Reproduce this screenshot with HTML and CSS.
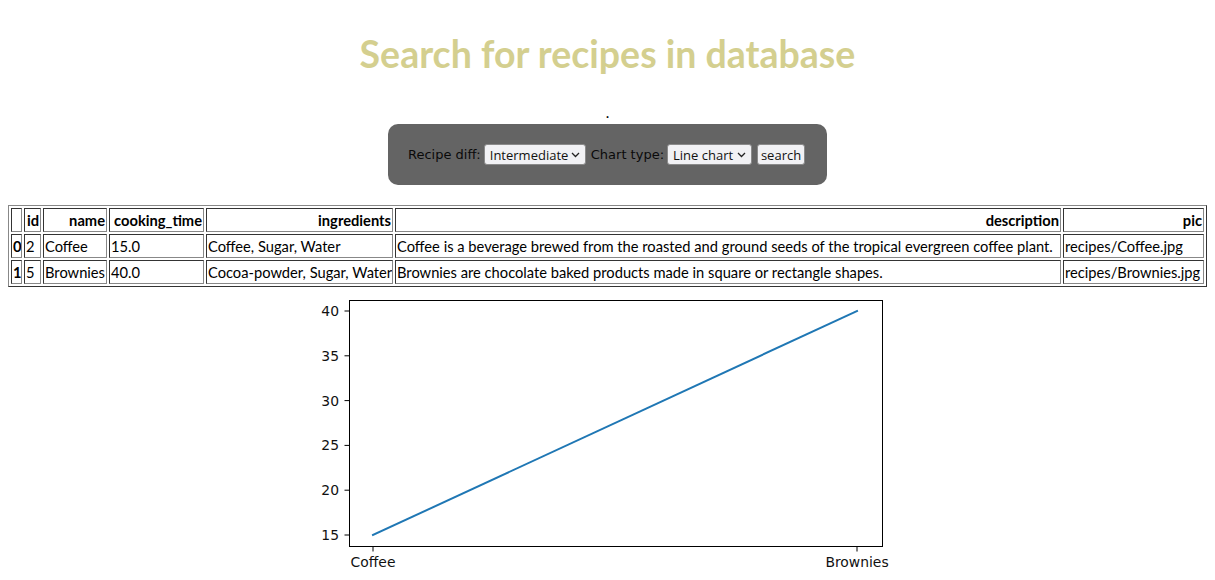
FILE: index.html
```html
<!DOCTYPE html>
<html>
<head>
<meta charset="utf-8">
<title>Recipes</title>
<link rel="stylesheet" href="styles.css">
</head>
<body>
<h1 class="title">Search for recipes in database</h1>
<p class="dot">.</p>
<form class="panel">
  <label class="lbl" for="diff">Recipe diff:</label>
  <span class="sel-wrap sel-diff">
    <select id="diff" class="sel"><option>Intermediate</option></select>
    <svg class="chev" width="9" height="6" viewBox="0 0 9 6"><path d="M1 1 L4.5 4.5 L8 1" fill="none" stroke="#222" stroke-width="1.3"/></svg>
  </span>
  <label class="lbl" for="chart">Chart type:</label>
  <span class="sel-wrap sel-chart">
    <select id="chart" class="sel"><option>Line chart</option></select>
    <svg class="chev" width="9" height="6" viewBox="0 0 9 6"><path d="M1 1 L4.5 4.5 L8 1" fill="none" stroke="#222" stroke-width="1.3"/></svg>
  </span>
  <button type="button" class="btn">search</button>
</form>
<table class="dataframe">
  <colgroup>
    <col class="c-idx"><col class="c-id"><col class="c-name"><col class="c-time"><col class="c-ing"><col class="c-desc"><col class="c-pic">
  </colgroup>
  <thead>
    <tr><th></th><th>id</th><th>name</th><th>cooking_time</th><th>ingredients</th><th>description</th><th>pic</th></tr>
  </thead>
  <tbody>
    <tr><th>0</th><td>2</td><td>Coffee</td><td>15.0</td><td>Coffee, Sugar, Water</td><td>Coffee is a beverage brewed from the roasted and ground seeds of the tropical evergreen coffee plant.</td><td>recipes/Coffee.jpg</td></tr>
    <tr><th>1</th><td>5</td><td>Brownies</td><td>40.0</td><td>Cocoa-powder, Sugar, Water</td><td>Brownies are chocolate baked products made in square or rectangle shapes.</td><td>recipes/Brownies.jpg</td></tr>
  </tbody>
</table>
<svg class="chart" width="641" height="294" viewBox="0 0 641 294">
  <g font-family="DejaVu Sans" font-size="13.9" fill="#111">
    <line x1="62.5" y1="25" x2="57.5" y2="25" stroke="#000" stroke-width="1"/>
    <line x1="62.5" y1="69.8" x2="57.5" y2="69.8" stroke="#000" stroke-width="1"/>
    <line x1="62.5" y1="114.6" x2="57.5" y2="114.6" stroke="#000" stroke-width="1"/>
    <line x1="62.5" y1="159.4" x2="57.5" y2="159.4" stroke="#000" stroke-width="1"/>
    <line x1="62.5" y1="204.2" x2="57.5" y2="204.2" stroke="#000" stroke-width="1"/>
    <line x1="62.5" y1="249" x2="57.5" y2="249" stroke="#000" stroke-width="1"/>
    <text x="52" y="30" text-anchor="end">40</text>
    <text x="52" y="74.8" text-anchor="end">35</text>
    <text x="52" y="119.6" text-anchor="end">30</text>
    <text x="52" y="164.4" text-anchor="end">25</text>
    <text x="52" y="209.2" text-anchor="end">20</text>
    <text x="52" y="254" text-anchor="end">15</text>
    <line x1="86" y1="260.5" x2="86" y2="265.5" stroke="#000" stroke-width="1"/>
    <line x1="570" y1="260.5" x2="570" y2="265.5" stroke="#000" stroke-width="1"/>
    <text x="86" y="280.5" text-anchor="middle">Coffee</text>
    <text x="570" y="280.5" text-anchor="middle">Brownies</text>
  </g>
  <polyline points="86,249 570,25" fill="none" stroke="#1f77b4" stroke-width="2" stroke-linecap="square"/>
  <rect x="62.5" y="14.5" width="533" height="246" fill="none" stroke="#000" stroke-width="1"/>
</svg>
</body>
</html>
```
FILE: styles.css
```css
body {
  margin: 8px;
  font-family: Lato, "Open Sans", sans-serif;
  font-size: 14.7px;
  color: #000;
  background: #fff;
}
.title {
  margin: 24px 0 0;
  text-align: center;
  font-family: Lato, sans-serif;
  font-weight: bold;
  font-size: 37.5px;
  line-height: 44px;
  color: #d4cf8f;
}
.dot {
  margin: 27px 0 0;
  text-align: center;
  font-size: 15px;
  line-height: 18px;
}
.panel {
  display: flex;
  align-items: center;
  width: fit-content;
  height: 21px;
  margin: 3px auto 0;
  padding: 20px 22px 20px 20px;
  background: #646464;
  border-radius: 10px;
}
.lbl {
  font-family: "DejaVu Sans", sans-serif;
  font-size: 13px;
  color: #0a0a0a;
  margin-right: 3px;
}
.sel-wrap {
  position: relative;
  display: inline-block;
  margin-right: 5px;
  height: 21px;
}
.sel-diff { width: 102px; }
.sel-chart { width: 85px; }
.sel {
  appearance: none;
  -webkit-appearance: none;
  box-sizing: border-box;
  width: 100%;
  height: 21px;
  margin: 0;
  padding: 0 0 0 5px;
  border: 1px solid #8a8a8a;
  border-radius: 3px;
  background: #f1f1f4;
  font-family: "Open Sans", sans-serif;
  font-size: 13px;
  color: #111;
}
.chev {
  position: absolute;
  right: 6px;
  top: 8px;
  pointer-events: none;
}
.btn {
  box-sizing: border-box;
  height: 21px;
  width: 48px;
  margin: 0;
  padding: 0;
  border: 1px solid #8a8a8a;
  border-radius: 3px;
  background: #f1f1f4;
  font-family: "Open Sans", sans-serif;
  font-size: 13px;
  color: #111;
}
.dataframe {
  margin-top: 20px;
  width: 100%;
  table-layout: fixed;
  border: 1px outset #888;
  border-spacing: 2px;
}
.dataframe th,
.dataframe td {
  border: 1px inset #888;
  padding: 0 1px;
  line-height: 22px;
  white-space: nowrap;
  overflow: hidden;
}
.dataframe th {
  text-align: right;
  font-weight: bold;
}
.dataframe tbody th {
  text-align: left;
}
.dataframe td {
  text-align: left;
}
.c-idx { width: 11px; }
.c-id { width: 17px; }
.c-name { width: 64px; }
.c-time { width: 95px; }
.c-ing { width: 187px; }
.c-pic { width: 141px; }
.chart {
  display: block;
  margin: -1px auto 0;
}
```
